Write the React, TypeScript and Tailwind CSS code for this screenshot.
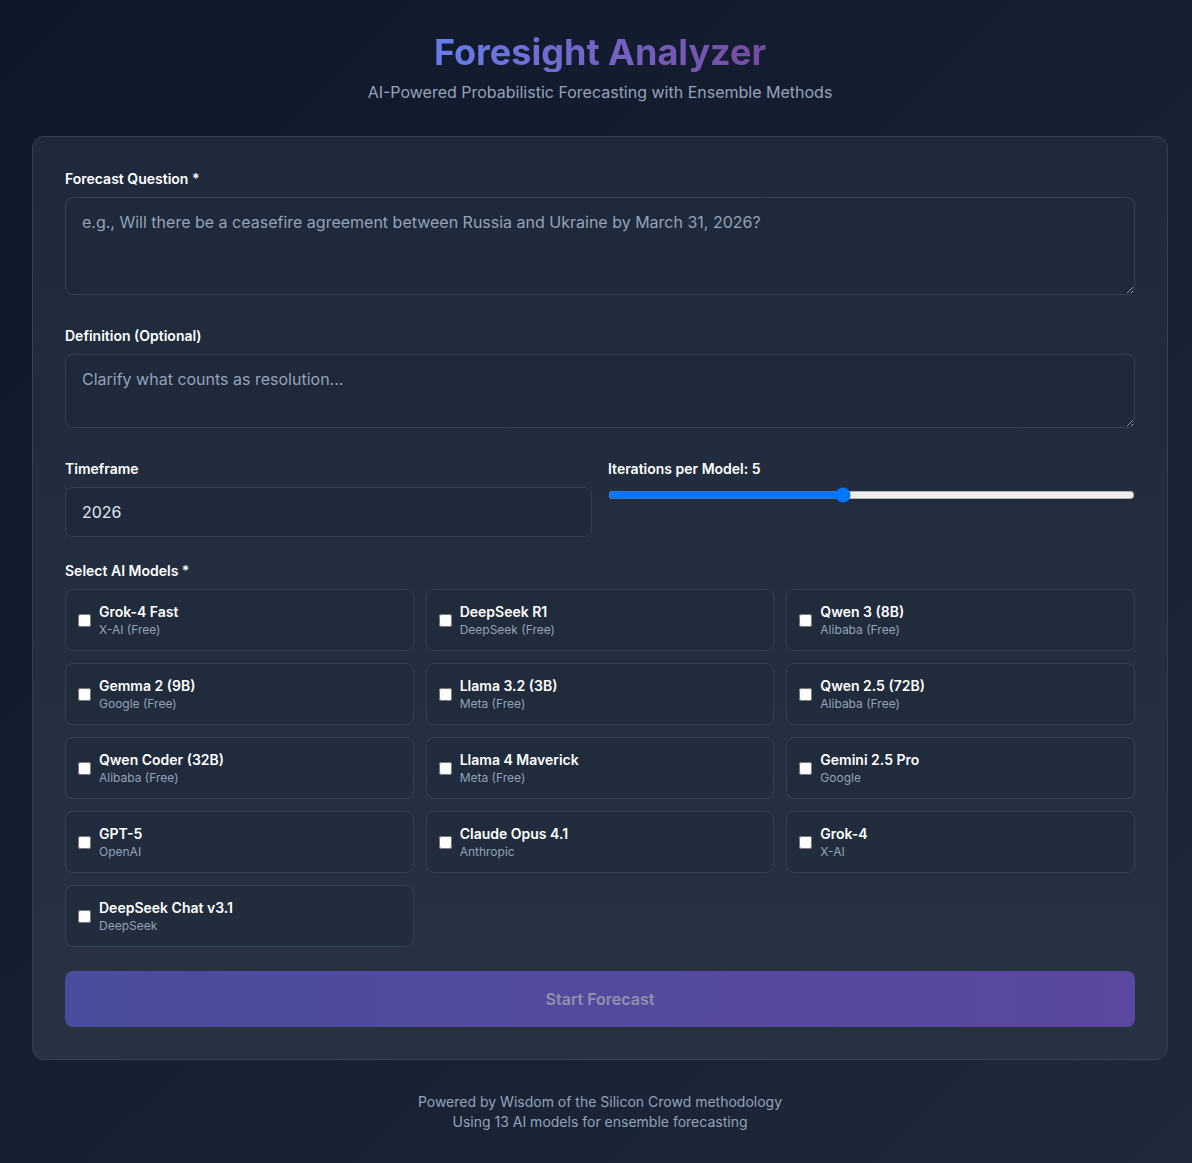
import { useState } from "react";

interface Model {
  id: string;
  name: string;
  provider: string;
}

const models: Model[] = [
  { id: "grok-4-fast", name: "Grok-4 Fast", provider: "X-AI (Free)" },
  { id: "deepseek-r1", name: "DeepSeek R1", provider: "DeepSeek (Free)" },
  { id: "qwen3-8b", name: "Qwen 3 (8B)", provider: "Alibaba (Free)" },
  { id: "gemma-2-9b", name: "Gemma 2 (9B)", provider: "Google (Free)" },
  { id: "llama-3.2-3b", name: "Llama 3.2 (3B)", provider: "Meta (Free)" },
  { id: "qwen-2.5-72b", name: "Qwen 2.5 (72B)", provider: "Alibaba (Free)" },
  { id: "qwen-coder-32b", name: "Qwen Coder (32B)", provider: "Alibaba (Free)" },
  { id: "llama-4-maverick", name: "Llama 4 Maverick", provider: "Meta (Free)" },
  { id: "gemini-2.5-pro", name: "Gemini 2.5 Pro", provider: "Google" },
  { id: "gpt-5", name: "GPT-5", provider: "OpenAI" },
  { id: "claude-opus-4.1", name: "Claude Opus 4.1", provider: "Anthropic" },
  { id: "grok-4", name: "Grok-4", provider: "X-AI" },
  { id: "deepseek-chat-v3.1", name: "DeepSeek Chat v3.1", provider: "DeepSeek" },
];

const App = () => {
  const [question, setQuestion] = useState("");
  const [definition, setDefinition] = useState("");
  const [timeframe, setTimeframe] = useState("2026");
  const [iterations, setIterations] = useState(5);
  const [selected, setSelected] = useState<string[]>([]);

  // Marca o desmarca un modelo
  const toggleModel = (id: string) => {
    setSelected((prev) =>
      prev.includes(id) ? prev.filter((m) => m !== id) : [...prev, id]
    );
  };

  const canStart = question.trim() !== "" && selected.length > 0;

  return (
    <div
      className="min-h-screen bg-gradient-to-br from-[#0f172a] to-[#1e293b] pt-8 pb-8 pl-8 pr-6 text-[#e2e8f0]"
      style={{ fontFamily: "Inter, 'Noto Sans', sans-serif" }}
    >
      <div className="mx-auto max-w-[1136px]">
        {/* Encabezado */}
        <div className="text-center">
          <h1 className="inline-block bg-gradient-to-r from-[#667eea] to-[#764ba2] bg-clip-text text-4xl font-bold leading-10 text-transparent">
            Foresight Analyzer
          </h1>
          <p className="mt-2 text-base leading-6 text-[#94a3b8]">
            AI-Powered Probabilistic Forecasting with Ensemble Methods
          </p>
        </div>

        {/* Formulario */}
        <div className="mt-8 rounded-xl border border-[#334155] bg-gradient-to-b from-[#1e293b] to-[#283243] p-8">
          <label className="mb-2 block text-sm font-semibold leading-5 text-white">
            Forecast Question *
          </label>
          <textarea
            rows={3}
            value={question}
            onChange={(e) => setQuestion(e.target.value)}
            placeholder="e.g., Will there be a ceasefire agreement between Russia and Ukraine by March 31, 2026?"
            className="mb-[31px] block w-full rounded-lg border border-[#334155] bg-[#1e293b] px-4 py-3 text-base leading-6 text-[#e2e8f0] outline-none placeholder:text-[#94a3b8]"
          />

          <label className="mb-2 block text-sm font-semibold leading-5 text-white">
            Definition (Optional)
          </label>
          <textarea
            rows={2}
            value={definition}
            onChange={(e) => setDefinition(e.target.value)}
            placeholder="Clarify what counts as resolution..."
            className="mb-[31px] block w-full rounded-lg border border-[#334155] bg-[#1e293b] px-4 py-3 text-base leading-6 text-[#e2e8f0] outline-none placeholder:text-[#94a3b8]"
          />

          <div className="mb-6 grid grid-cols-2 gap-4">
            <div>
              <label className="mb-2 block text-sm font-semibold leading-5 text-white">
                Timeframe
              </label>
              <input
                type="text"
                value={timeframe}
                onChange={(e) => setTimeframe(e.target.value)}
                className="block w-full rounded-lg border border-[#334155] bg-[#1e293b] px-4 py-3 text-base leading-6 text-[#e2e8f0] outline-none"
              />
            </div>
            <div>
              <label className="mb-2 block text-sm font-semibold leading-5 text-white">
                Iterations per Model: {iterations}
              </label>
              <input
                type="range"
                min={1}
                max={10}
                value={iterations}
                onChange={(e) => setIterations(Number(e.target.value))}
                className="block w-full"
              />
            </div>
          </div>

          <label className="mb-2 block text-sm font-semibold leading-5 text-white">
            Select AI Models *
          </label>
          <div className="grid grid-cols-3 gap-3">
            {models.map((model) => (
              <label
                key={model.id}
                className="flex cursor-pointer items-center gap-2 rounded-lg border border-[#334155] bg-[#1e293b]/60 p-3"
              >
                <input
                  type="checkbox"
                  checked={selected.includes(model.id)}
                  onChange={() => toggleModel(model.id)}
                  className="h-[13px] w-[13px] shrink-0"
                />
                <div>
                  <div className="text-sm font-semibold leading-5 text-white">
                    {model.name}
                  </div>
                  <div className="text-xs leading-4 text-[#94a3b8]">
                    {model.provider}
                  </div>
                </div>
              </label>
            ))}
          </div>

          <button
            disabled={!canStart}
            className={
              canStart
                ? "mt-6 block w-full rounded-lg bg-gradient-to-r from-[#667eea] to-[#764ba2] py-4 text-base font-semibold leading-6 text-white"
                : "mt-6 block w-full rounded-lg bg-gradient-to-r from-[#494c9d] to-[#5b48a0] py-4 text-base font-semibold leading-6 text-[#9092ab]"
            }
          >
            Start Forecast
          </button>
        </div>

        {/* Pie de página */}
        <div className="mt-8 text-center text-sm leading-5 text-[#94a3b8]">
          <p>Powered by Wisdom of the Silicon Crowd methodology</p>
          <p>Using 13 AI models for ensemble forecasting</p>
        </div>
      </div>
    </div>
  );
};

export default App;
